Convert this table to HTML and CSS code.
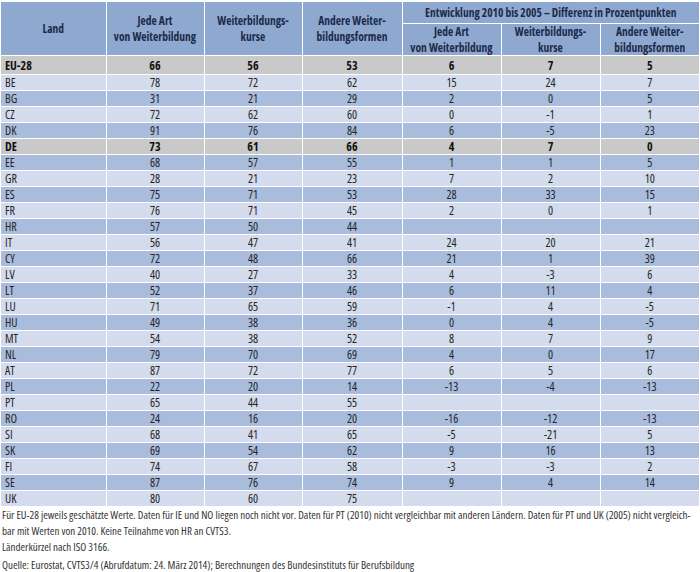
FILE: index.html
```html
<!DOCTYPE html>
<html lang="de">
<head>
<meta charset="utf-8">
<link rel="stylesheet" href="styles.css">
</head>
<body>
<div class="page">
<table class="tbl">
<colgroup>
<col class="c-land"><col class="c-a"><col class="c-b"><col class="c-c"><col class="c-d"><col class="c-e"><col class="c-f">
</colgroup>
<thead>
<tr class="h1">
<th rowspan="2">Land</th>
<th rowspan="2">Jede Art<br>von Weiterbildung</th>
<th rowspan="2">Weiterbildungs-<br>kurse</th>
<th rowspan="2">Andere Weiter-<br>bildungsformen</th>
<th colspan="3">Entwicklung 2010 bis 2005 – Differenz in Prozentpunkten</th>
</tr>
<tr class="h2">
<th>Jede Art<br>von Weiterbildung</th>
<th>Weiterbildungs-<br>kurse</th>
<th>Andere Weiter-<br>bildungsformen</th>
</tr>
</thead>
<tbody>
<tr class="g first"><td>EU-28</td><td>66</td><td>56</td><td>53</td><td>6</td><td>7</td><td>5</td></tr>
<tr class="l"><td>BE</td><td>78</td><td>72</td><td>62</td><td>15</td><td>24</td><td>7</td></tr>
<tr class="d"><td>BG</td><td>31</td><td>21</td><td>29</td><td>2</td><td>0</td><td>5</td></tr>
<tr class="l"><td>CZ</td><td>72</td><td>62</td><td>60</td><td>0</td><td>-1</td><td>1</td></tr>
<tr class="d"><td>DK</td><td>91</td><td>76</td><td>84</td><td>6</td><td>-5</td><td>23</td></tr>
<tr class="g"><td>DE</td><td>73</td><td>61</td><td>66</td><td>4</td><td>7</td><td>0</td></tr>
<tr class="d"><td>EE</td><td>68</td><td>57</td><td>55</td><td>1</td><td>1</td><td>5</td></tr>
<tr class="l"><td>GR</td><td>28</td><td>21</td><td>23</td><td>7</td><td>2</td><td>10</td></tr>
<tr class="d"><td>ES</td><td>75</td><td>71</td><td>53</td><td>28</td><td>33</td><td>15</td></tr>
<tr class="l"><td>FR</td><td>76</td><td>71</td><td>45</td><td>2</td><td>0</td><td>1</td></tr>
<tr class="d"><td>HR</td><td>57</td><td>50</td><td>44</td><td></td><td></td><td></td></tr>
<tr class="l"><td>IT</td><td>56</td><td>47</td><td>41</td><td>24</td><td>20</td><td>21</td></tr>
<tr class="d"><td>CY</td><td>72</td><td>48</td><td>66</td><td>21</td><td>1</td><td>39</td></tr>
<tr class="l"><td>LV</td><td>40</td><td>27</td><td>33</td><td>4</td><td>-3</td><td>6</td></tr>
<tr class="d"><td>LT</td><td>52</td><td>37</td><td>46</td><td>6</td><td>11</td><td>4</td></tr>
<tr class="l"><td>LU</td><td>71</td><td>65</td><td>59</td><td>-1</td><td>4</td><td>-5</td></tr>
<tr class="d"><td>HU</td><td>49</td><td>38</td><td>36</td><td>0</td><td>4</td><td>-5</td></tr>
<tr class="l"><td>MT</td><td>54</td><td>38</td><td>52</td><td>8</td><td>7</td><td>9</td></tr>
<tr class="d"><td>NL</td><td>79</td><td>70</td><td>69</td><td>4</td><td>0</td><td>17</td></tr>
<tr class="l"><td>AT</td><td>87</td><td>72</td><td>77</td><td>6</td><td>5</td><td>6</td></tr>
<tr class="d"><td>PL</td><td>22</td><td>20</td><td>14</td><td>-13</td><td>-4</td><td>-13</td></tr>
<tr class="l"><td>PT</td><td>65</td><td>44</td><td>55</td><td></td><td></td><td></td></tr>
<tr class="d"><td>RO</td><td>24</td><td>16</td><td>20</td><td>-16</td><td>-12</td><td>-13</td></tr>
<tr class="l"><td>SI</td><td>68</td><td>41</td><td>65</td><td>-5</td><td>-21</td><td>5</td></tr>
<tr class="d"><td>SK</td><td>69</td><td>54</td><td>62</td><td>9</td><td>16</td><td>13</td></tr>
<tr class="l"><td>FI</td><td>74</td><td>67</td><td>58</td><td>-3</td><td>-3</td><td>2</td></tr>
<tr class="d"><td>SE</td><td>87</td><td>76</td><td>74</td><td>9</td><td>4</td><td>14</td></tr>
<tr class="l"><td>UK</td><td>80</td><td>60</td><td>75</td><td></td><td></td><td></td></tr>
</tbody>
</table>
<div class="notes">
<p class="note">Für EU-28 jeweils geschätzte Werte. Daten für IE und NO liegen noch nicht vor. Daten für PT (2010) nicht vergleichbar mit anderen Ländern. Daten für PT und UK (2005) nicht vergleich-<br>bar mit Werten von 2010. Keine Teilnahme von HR an CVTS3.<br>Länderkürzel nach ISO 3166.</p>
<p class="source">Quelle: Eurostat, CVTS3/4 (Abrufdatum: 24. März 2014); Berechnungen des Bundesinstituts für Berufsbildung</p>
</div>
</div>
</body>
</html>
```
FILE: styles.css
```css
html, body {
  margin: 0;
  padding: 0;
  background: #ffffff;
}
.page {
  padding: 2px 1px 0 1px;
  font-family: "Open Sans", "Liberation Sans", sans-serif;
  font-stretch: 80%;
  color: #262626;
}
.tbl {
  border-collapse: collapse;
  table-layout: fixed;
  width: 698px;
  font-size: 12px;
}
.c-land { width: 105px; }
.c-a { width: 98px; }
.c-b { width: 98px; }
.c-c { width: 100px; }
.c-d { width: 99px; }
.c-e { width: 99px; }
.c-f { width: 99px; }
.tbl th {
  background: #8fa8cf;
  color: #1c2b4b;
  font-weight: bold;
  font-size: 11.5px;
  font-stretch: 84%;
  line-height: 15.5px;
  border: 1px solid #ffffff;
  border-top: none;
  padding: 0;
  text-align: center;
  vertical-align: middle;
  white-space: nowrap;
}
.tbl thead tr:first-child th:first-child { border-left: none; }
.tbl th:last-child, .tbl td:last-child { border-right: none; }
.h1 th { height: 21px; }
.h2 th { height: 29px; }
.tbl td {
  height: 15px;
  line-height: 15px;
  padding: 0;
  text-align: center;
  border: 1px solid #ffffff;
  border-top: none;
  white-space: nowrap;
}
.tbl td:first-child {
  text-align: left;
  padding-left: 4px;
  border-left: none;
}
.tbl tr.first td { height: 18px; }
.g td { background: #c9c9c9; font-weight: bold; color: #111; }
.l td { background: #d3dbec; }
.d td { background: #a9bcdc; }
.notes {
  font-size: 11px;
  font-stretch: 78%;
  color: #333333;
  padding-left: 1px;
}
.note {
  margin: 0;
  line-height: 16px;
  white-space: nowrap;
}
.source {
  margin: 2px 0 0 0;
  line-height: 15px;
  white-space: nowrap;
}
```
